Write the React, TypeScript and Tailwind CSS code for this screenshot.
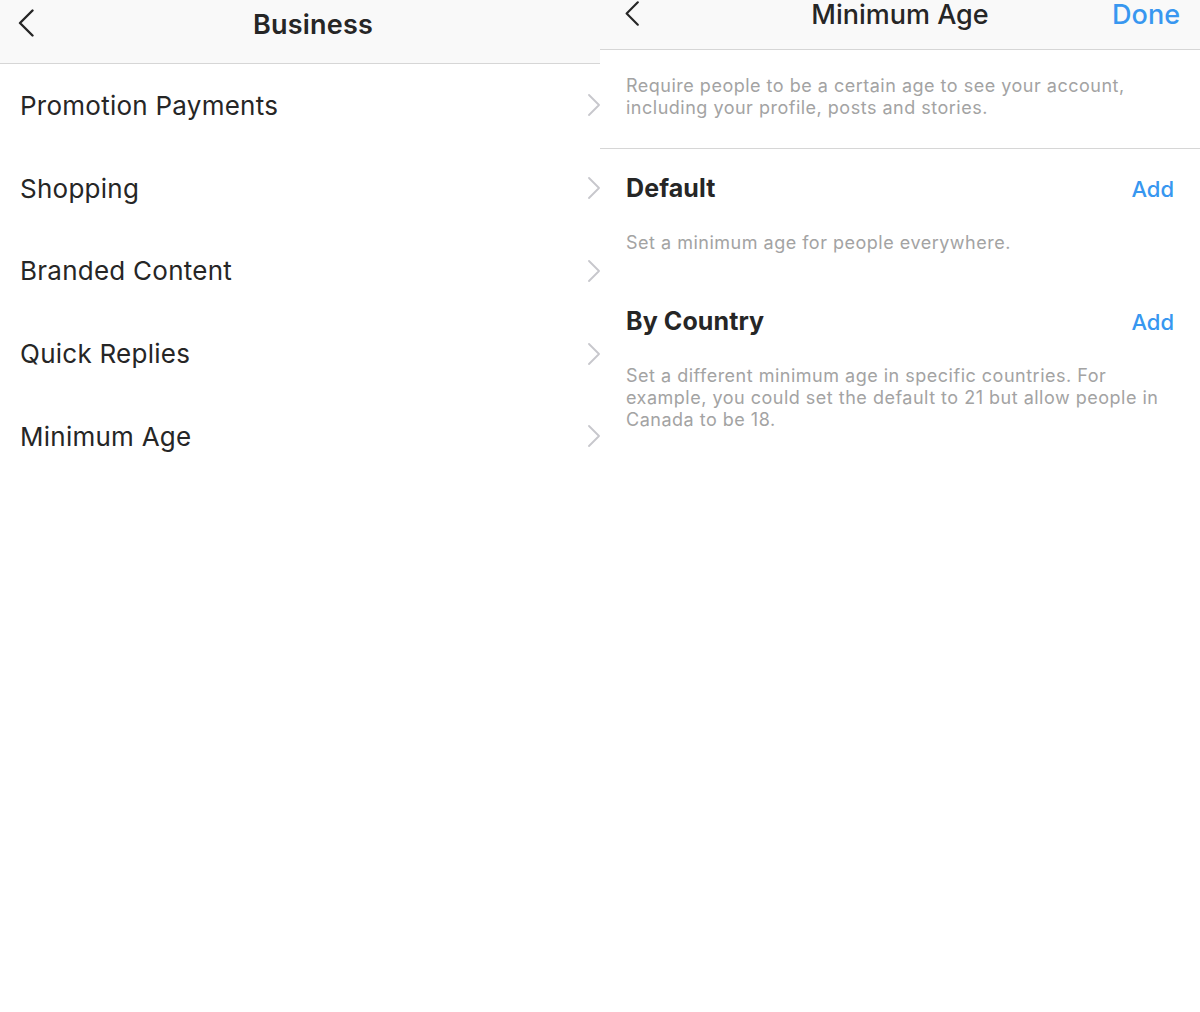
const font = { fontFamily: 'Inter, "Noto Sans", sans-serif' };

function BackChevron({ className }: { className?: string }) {
  return (
    <svg viewBox="0 0 16 28" className={className} fill="none">
      <path d="M14.5 1.5 L2 14 L14.5 26.5" stroke="#262626" strokeWidth="2.4" strokeLinecap="round" strokeLinejoin="round" />
    </svg>
  );
}

function RowChevron() {
  return (
    <svg viewBox="0 0 12 22" className="w-[12px] h-[22px]" fill="none">
      <path d="M1 1 L11 11 L1 21" stroke="#c7c7cc" strokeWidth="1.8" strokeLinecap="round" strokeLinejoin="round" />
    </svg>
  );
}

const items = ['Promotion Payments', 'Shopping', 'Branded Content', 'Quick Replies', 'Minimum Age'];

function BusinessScreen() {
  return (
    <div className="w-[600px] h-full bg-white flex flex-col">
      <div className="h-[64px] bg-[#f9f9f9] border-b border-[#d6d6d6] flex items-start pt-[9px] relative">
        <BackChevron className="absolute left-[18px] top-[9px] w-[16px] h-[28px]" />
        <div className="w-full flex justify-center pl-[26px]">
          <span className="text-[27px] font-semibold text-[#262626] leading-[32px] tracking-[0.2px]">Business</span>
        </div>
      </div>
      <div className="flex flex-col">
        {items.map((item) => (
          <div key={item} className="h-[82.75px] flex items-center justify-between pl-[20px]">
            <span className="text-[26px] text-[#262626] tracking-[0.25px]">{item}</span>
            <RowChevron />
          </div>
        ))}
      </div>
    </div>
  );
}

function Section({ title, desc }: { title: string; desc: string }) {
  return (
    <div className="px-[26px]">
      <div className="flex items-center justify-between h-[40px]">
        <span className="text-[25px] font-bold text-[#262626] tracking-[0.1px]">{title}</span>
        <span className="text-[22px] font-medium text-[#3897f0]">Add</span>
      </div>
      <p className="mt-[23px] text-[18px] leading-[22px] text-[#a3a3a3] tracking-[0.5px]">{desc}</p>
    </div>
  );
}

function MinimumAgeScreen() {
  return (
    <div className="w-[600px] h-full bg-white flex flex-col">
      <div className="h-[50px] bg-[#f9f9f9] border-b border-[#d6d6d6] relative flex items-start justify-center pt-[1px]">
        <BackChevron className="absolute left-[24px] top-[1px] w-[16px] h-[25px]" />
        <span className="text-[27px] font-medium text-[#262626] leading-[28px]">Minimum Age</span>
        <span className="absolute right-[20px] top-[1px] text-[27px] font-medium text-[#3897f0] leading-[28px]">Done</span>
      </div>
      <div className="h-[99px] border-b border-[#d6d6d6] px-[26px] pt-[25px]">
        <p className="text-[18px] leading-[22px] text-[#a3a3a3] tracking-[0.5px]">
          Require people to be a certain age to see your account, including your profile, posts and stories.
        </p>
      </div>
      <div className="pt-[20px]">
        <Section title="Default" desc="Set a minimum age for people everywhere." />
      </div>
      <div className="pt-[48px]">
        <Section
          title="By Country"
          desc="Set a different minimum age in specific countries. For example, you could set the default to 21 but allow people in Canada to be 18."
        />
      </div>
    </div>
  );
}

export default function App() {
  return (
    <div className="w-[1200px] h-[1012px] flex bg-white overflow-hidden" style={font}>
      <BusinessScreen />
      <MinimumAgeScreen />
    </div>
  );
}
